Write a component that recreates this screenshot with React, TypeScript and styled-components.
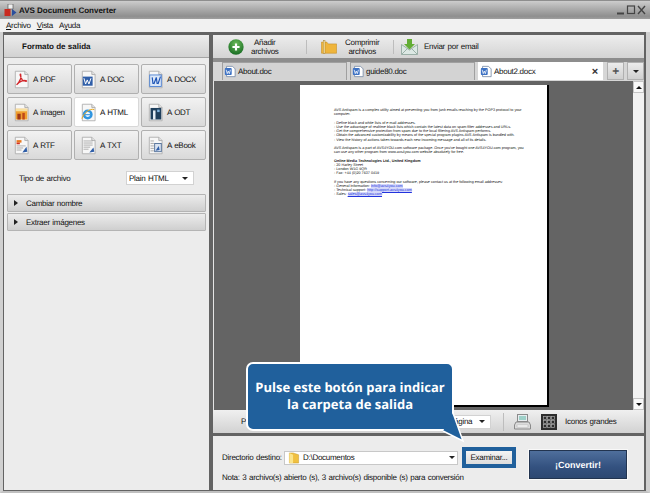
import React from "react";
import styled, { createGlobalStyle } from "styled-components";

const Global = createGlobalStyle`
  html, body { margin: 0; padding: 0; background: #b8b8b8; }
  #root { width: 650px; height: 493px; overflow: hidden; }
  * { box-sizing: border-box; }
`;

const Window = styled.div`
  position: relative;
  width: 650px;
  height: 493px;
  display: flex;
  flex-direction: column;
  overflow: hidden;
  background: #c9c9c9;
  border-top: 1px solid #8e8e8e;
  font-family: "Liberation Sans", Arial, sans-serif;
  font-size: 8px;
  letter-spacing: -0.28px;
  word-spacing: 0.6px;
  text-rendering: geometricPrecision;
  color: #111;
`;

const TitleBar = styled.div`
  height: 18px;
  flex: none;
  display: flex;
  align-items: center;
  padding: 0 4px 0 4px;
  gap: 2px;
  background: linear-gradient(#cdcdcd 0%, #b6b6b6 30%, #8f8f8f 85%, #9e9e9e 100%);
`;
const TitleText = styled.span`
  flex: 1;
  font-weight: 700;
  font-size: 8px;
  letter-spacing: 0;
  word-spacing: 0;
  color: #111;
`;
const MenuBar = styled.div`
  height: 13px;
  flex: none;
  display: flex;
  align-items: center;
  gap: 6px;
  padding: 0 6px;
  background: #f1f1f1;
  u { text-underline-offset: 1px; }
`;
const Body = styled.div`
  flex: 1;
  min-height: 0;
  display: flex;
  gap: 4px;
  background: #636363;
  border-left: 3px solid #d0d0d0;
  border-right: 4px solid #d0d0d0;
  border-bottom: 2px solid #c0c0c0;
  padding: 3px 2px 1px 1px;
`;
const LeftPanel = styled.aside`
  width: 205px;
  flex: none;
  display: flex;
  flex-direction: column;
  background: #ececec;
`;
const PanelHeader = styled.div`
  height: 23px;
  flex: none;
  display: flex;
  align-items: center;
  padding-left: 18px;
  font-weight: 700;
  letter-spacing: 0;
  word-spacing: 0;
  background: linear-gradient(#ededed, #d2d2d2);
  border-bottom: 1px solid #a5a5a5;
`;
const FormatGrid = styled.div`
  display: grid;
  grid-template-columns: repeat(3, 65px);
  grid-auto-rows: 30px;
  column-gap: 2px;
  row-gap: 3px;
  padding: 6px 0 0 3px;
`;
const FormatButton = styled.div<{ $active?: boolean }>`
  display: flex;
  align-items: center;
  gap: 3px;
  padding-left: 5px;
  border: 1px solid ${p => (p.$active ? "#d8d8d8" : "#b0b0b0")};
  border-radius: 2px;
  background: ${p => (p.$active ? "#ffffff" : "linear-gradient(#f2f2f2, #d9d9d9)")};
`;
const TypeRow = styled.div`
  display: flex;
  align-items: center;
  justify-content: space-between;
  padding: 2px 15px 0 15px;
  height: 34px;
`;
const Select = styled.div<{ $w: number }>`
  width: ${p => p.$w}px;
  height: 14px;
  flex: none;
  display: flex;
  align-items: center;
  justify-content: space-between;
  padding: 0 5px 0 2px;
  background: #fff;
  border: 1px solid #d2d2d2;
`;
const Caret = styled.span`
  width: 0;
  height: 0;
  flex: none;
  border-left: 3px solid transparent;
  border-right: 3px solid transparent;
  border-top: 3px solid #222;
`;
const Accordion = styled.div`
  display: flex;
  flex-direction: column;
  gap: 1px;
  margin: 0 3px;
`;
const AccordionRow = styled.div`
  height: 18px;
  display: flex;
  align-items: center;
  gap: 8px;
  padding-left: 6px;
  background: linear-gradient(#ececec, #cfcfcf);
  border: 1px solid #b4b4b4;
  border-radius: 1px;
`;
const Arrow = styled.span`
  width: 0;
  height: 0;
  border-top: 3px solid transparent;
  border-bottom: 3px solid transparent;
  border-left: 4px solid #222;
`;
const RightColumn = styled.main`
  flex: 1;
  min-width: 0;
  display: flex;
  flex-direction: column;
`;
const Workspace = styled.section`
  flex: 1;
  min-height: 0;
  display: flex;
  flex-direction: column;
  background: #e4e4e4;
`;
const Toolbar = styled.div`
  height: 23px;
  flex: none;
  display: flex;
  align-items: center;
  background: linear-gradient(#ededed, #d4d4d4);
  padding-left: 15px;
`;
const ToolItem = styled.div<{ $w: number; $gap: number }>`
  width: ${p => p.$w}px;
  flex: none;
  display: flex;
  align-items: center;
  gap: ${p => p.$gap}px;
  line-height: 9px;
`;
const ToolLabel = styled.span`
  text-align: center;
`;
const ToolSep = styled.span<{ $after: number }>`
  width: 1px;
  height: 14px;
  flex: none;
  margin-right: ${p => p.$after}px;
  background: #bdbdbd;
`;
const TabStrip = styled.div`
  height: 23px;
  flex: none;
  display: flex;
  align-items: flex-start;
  gap: 3px;
  padding: 4px 0 0 9px;
  background: linear-gradient(#8d8d8d 0, #8d8d8d 4px, #d6d6d6 4px, #d6d6d6 100%);
`;
const Tab = styled.div<{ $active?: boolean }>`
  width: 125px;
  height: 18px;
  flex: none;
  display: flex;
  align-items: center;
  gap: 2px;
  padding: 0 4px 0 1px;
  background: ${p => (p.$active ? "#fff" : "#d3d3d3")};
  border: 1px solid ${p => (p.$active ? "#fff" : "#a0a0a0")};
  border-bottom: none;
  margin-right: ${p => (p.$active ? 1 : 0)}px;
`;
const TabName = styled.span`
  flex: 1;
`;
const TabClose = styled.b`
  font-size: 11px;
  line-height: 10px;
  color: #333;
`;
const TabButton = styled.div`
  width: 17px;
  height: 18px;
  flex: none;
  display: flex;
  align-items: center;
  justify-content: center;
  background: linear-gradient(#ececec, #cfcfcf);
  border: 1px solid #b0b0b0;
  font-weight: 700;
  font-size: 12px;
  color: #555;
`;
const Viewer = styled.div`
  flex: 1;
  min-height: 0;
  display: flex;
  background: #646464;
  margin-left: 1px;
`;
const PageArea = styled.div`
  flex: 1;
  min-width: 0;
  display: flex;
  padding: 4px 0 0 86px;
`;
const Page = styled.article`
  width: 249px;
  height: 322px;
  flex: none;
  background: #fff;
  border-right: 2px solid #000;
  border-bottom: 2px solid #000;
  padding: 23px 17px 0 34px;
  font-size: 3.72px;
  letter-spacing: 0;
  word-spacing: 0;
  line-height: 4.25px;
  color: #111;
`;
const Para = styled.p`
  margin: 0 0 4.1px;
`;
const PageLink = styled.span`
  color: #2233dd;
  background: #d5d8fa;
  text-decoration: underline;
`;
const Scrollbar = styled.div`
  width: 11px;
  flex: none;
  display: flex;
  flex-direction: column;
  justify-content: space-between;
  background: #f2f2f2;
`;
const ScrollBtn = styled.div<{ $down?: boolean }>`
  height: 12px;
  display: flex;
  align-items: center;
  justify-content: center;
  background: #f8f8f8;
  border: 1px solid #c4c4c4;
  &::after {
    content: "";
    border-left: 3px solid transparent;
    border-right: 3px solid transparent;
    ${p => (p.$down ? "border-top: 3px solid #111;" : "border-bottom: 3px solid #111;")}
  }
`;
const ViewBar = styled.div`
  height: 23px;
  flex: none;
  display: flex;
  align-items: center;
  padding-left: 28px;
  background: linear-gradient(#f0f0f0, #d2d2d2);
`;
const ViewSpacer = styled.span<{ $w: number }>`
  flex: none;
  width: ${p => p.$w}px;
`;
const ViewSep = styled.span`
  width: 1px;
  height: 18px;
  flex: none;
  margin: 0 10px 0 12px;
  background: #bdbdbd;
`;
const BottomPanel = styled.section`
  height: 54px;
  flex: none;
  margin-top: 3px;
  display: flex;
  background: #ececec;
  padding: 11px 0 0 9px;
  gap: 13px;
`;
const DirBlock = styled.div`
  width: 294px;
  flex: none;
  display: flex;
  flex-direction: column;
  gap: 5px;
  line-height: 9px;
  white-space: nowrap;
`;
const DirRow = styled.div`
  display: flex;
  align-items: center;
  gap: 2px;
`;
const DirLabel = styled.span`
  width: 60px;
  flex: none;
`;
const DirInput = styled.div`
  width: 174px;
  height: 14px;
  flex: none;
  display: flex;
  align-items: center;
  gap: 3px;
  padding: 0 2px 0 3px;
  background: #fff;
  border: 1px solid #c8c8c8;
`;
const DirValue = styled.span`
  flex: 1;
`;
const BrowseFrame = styled.div`
  flex: none;
  margin-left: 2px;
  padding: 4px;
  background: #20609c;
`;
const BrowseButton = styled.div`
  width: 46px;
  height: 13px;
  display: flex;
  align-items: center;
  justify-content: center;
  background: linear-gradient(#f4f4f4, #dddddd);
`;
const ConvertButton = styled.div`
  width: 98px;
  height: 29px;
  flex: none;
  margin-top: 3px;
  display: flex;
  align-items: center;
  justify-content: center;
  background: linear-gradient(#4f6f9c, #33517f 60%, #2d4872);
  border: 1px solid #22344f;
  box-shadow: 0 0 0 1px #f8f8f8;
  color: #fff;
  font-weight: 700;
  font-size: 9px;
  letter-spacing: 0;
`;
const Callout = styled.div`
  position: absolute;
  left: 246px;
  top: 361px;
  width: 208px;
  height: 69px;
  display: flex;
  align-items: center;
  justify-content: center;
  text-align: center;
  padding-bottom: 2px;
  background: #20609c;
  border: 2px solid #fff;
  border-radius: 7px;
  color: #fff;
  font-family: "Open Sans", "Liberation Sans", sans-serif;
  font-weight: 700;
  font-size: 13px;
  letter-spacing: 0;
  word-spacing: 0;
  line-height: 16.5px;
`;
const CalloutTail = styled.svg`
  position: absolute;
  left: 438px;
  top: 407px;
  width: 30px;
  height: 36px;
`;
const IconSvg = styled.svg`
  flex: none;
`;

function DocIcon({ kind }: { kind: string }) {
  return (
    <IconSvg width={17} height={19} viewBox="0 0 20 23">
      <path d="M2.5 1.5H14L18 5.5V21.5H2.5Z" fill="#f7f7f7" stroke="#a9a9a9" />
      <path d="M14 1.5V5.5H18" fill="#e2e2e2" stroke="#a9a9a9" />
      {kind === "pdf" && (
        <path d="M4 18C8 14 10 9 9 5C8 4 8 8 11 12C13 14 17 14 16 13C14 12 8 13 4 18Z" fill="none" stroke="#d2262a" strokeWidth="1.5" />
      )}
      {kind === "doc" && (
        <>
          <rect x="3" y="8" width="12" height="11" fill="#2f5ea8" />
          <path d="M4.5 10L6.5 17L8.5 12L10.5 17L13 10" stroke="#fff" strokeWidth="1.2" fill="none" />
        </>
      )}
      {kind === "docx" && (
        <>
          <rect x="3" y="6" width="14" height="14" fill="#dbe7f8" stroke="#3f78cf" />
          <path d="M6 9L7 17M11 9L8 17M11 9L12 17M16 8L13 17" stroke="#1c53b5" strokeWidth="1.4" fill="none" />
        </>
      )}
      {kind === "img" && (
        <>
          <rect x="3" y="7" width="14" height="13" fill="#f0a030" />
          <rect x="3" y="7" width="14" height="3" fill="#f7e0a0" />
          <rect x="5" y="13" width="4" height="7" fill="#a03818" />
          <rect x="11" y="12" width="3" height="8" fill="#c04818" />
        </>
      )}
      {kind === "html" && (
        <>
          <circle cx="9" cy="14" r="6" fill="#2f95e0" />
          <circle cx="9" cy="14" r="3" fill="#f3f8fe" />
          <rect x="5.5" y="13.5" width="7" height="1.3" fill="#2f95e0" />
          <path d="M2 19C4 12 12 6 17 8" fill="none" stroke="#e8a820" strokeWidth="1.2" />
        </>
      )}
      {kind === "odt" && (
        <>
          <rect x="4" y="6" width="13" height="14" fill="#1f3f5c" />
          <rect x="7" y="9" width="3" height="11" fill="#e6eef5" />
          <rect x="12" y="8" width="3" height="3" fill="#7fb2dc" />
        </>
      )}
      {kind === "rtf" && (
        <>
          <rect x="4" y="5" width="6" height="3" fill="#e87820" />
          <rect x="4" y="8" width="4" height="2" fill="#d03020" />
          <path d="M4 12H15M4 14.5H12M4 17H10" stroke="#a0a0a0" />
          <path d="M11 20L16 13L17 19Z" fill="#2f5ea8" />
        </>
      )}
      {kind === "txt" && (
        <>
          <path d="M4 6H15M4 8.5H15M4 11H15M4 13.5H12M4 16H10" stroke="#a0a0a0" />
          <path d="M11 20L16 14L17 19Z" fill="#2f5ea8" />
        </>
      )}
      {kind === "ebook" && (
        <>
          <path d="M4 6H8M4 9H8M4 12H8M4 15H8M4 18H8" stroke="#9a9a9a" />
          <rect x="9" y="9" width="8" height="10" fill="#d8e2f0" stroke="#44648f" />
          <path d="M10 18L14 12L15 17Z" fill="#2f5ea8" />
        </>
      )}
    </IconSvg>
  );
}

function TabDocIcon() {
  return (
    <IconSvg width="12" height="13" viewBox="0 0 14 14">
      <path d="M3 1H10L13 4V13H3Z" fill="#fff" stroke="#7a8ea8" />
      <rect x="1" y="3" width="8" height="8" rx="1" fill="#3d72c4" />
      <path d="M2.5 5L3.8 9.5L5 6.5L6.2 9.5L7.5 5" stroke="#fff" strokeWidth="0.9" fill="none" />
    </IconSvg>
  );
}

function AppLogo() {
  return (
    <IconSvg width="13" height="13" viewBox="0 0 13 13">
      <rect x="4" y="0" width="5" height="5" fill="#eee" stroke="#444" strokeWidth="0.6" />
      <rect x="0.5" y="5" width="6" height="7" fill="#c92a20" />
      <path d="M8 5L12.5 8.5L8 12Z" fill="#2b4f9c" />
    </IconSvg>
  );
}

function WindowControls() {
  return (
    <IconSvg width="29" height="10" viewBox="0 0 29 10">
      <path d="M0 8.5H7" stroke="#444" strokeWidth="2" fill="none" />
      <rect x="10.5" y="1" width="7" height="7.5" stroke="#444" strokeWidth="1.2" fill="none" />
      <path d="M21 1L28 9M28 1L21 9" stroke="#444" strokeWidth="1.4" fill="none" />
    </IconSvg>
  );
}

function AddIcon() {
  return (
    <IconSvg width="16" height="16" viewBox="0 0 18 18">
      <defs>
        <radialGradient id="g" cx="50%" cy="30%" r="75%">
          <stop offset="0" stopColor="#6dbb5a" />
          <stop offset="1" stopColor="#11671f" />
        </radialGradient>
      </defs>
      <circle cx="9" cy="9" r="8.6" fill="url(#g)" />
      <path d="M9 5V13M5 9H13" stroke="#fff" strokeWidth="2.4" />
    </IconSvg>
  );
}

function ZipIcon() {
  return (
    <IconSvg width="16" height="14" viewBox="0 0 18 15">
      <path d="M0.5 2H6.5L8 4H17.5V14.5H0.5Z" fill="#efb53c" stroke="#c08a20" strokeWidth="0.6" />
      <rect x="2.5" y="0.5" width="2" height="14" fill="#fbe7a8" stroke="#a07820" strokeWidth="0.5" />
    </IconSvg>
  );
}

function MailIcon() {
  return (
    <IconSvg width="17" height="16" viewBox="0 0 17 16">
      <path d="M0.5 5.5L8.5 11L16.5 5.5V15.5H0.5Z" fill="#dce8e4" stroke="#9bb0a8" />
      <path d="M0.5 15.5L7 9M16.5 15.5L10 9" stroke="#9bb0a8" fill="none" />
      <path d="M6 0H11V5H14L8.5 10.5L3 5H6Z" fill="#62ad36" />
    </IconSvg>
  );
}

function PrinterIcon() {
  return (
    <IconSvg width="17" height="16" viewBox="0 0 17 16">
      <rect x="3.5" y="0.5" width="10" height="7" fill="#e8edf0" stroke="#8a8a8a" />
      <rect x="5" y="2" width="7" height="4" fill="#9ed0c8" />
      <path d="M2 8H15L16.5 11V15H0.5V11Z" fill="#dcdcdc" stroke="#8a8a8a" />
      <rect x="3" y="11" width="11" height="2" fill="#fff" stroke="#aaa" strokeWidth="0.5" />
    </IconSvg>
  );
}

function GridIcon() {
  const cells = [];
  for (let y = 0; y < 3; y++)
    for (let x = 0; x < 3; x++)
      cells.push(<rect key={`${x}${y}`} x={2.5 + x * 4} y={2.5 + y * 4} width="3" height="3" fill="none" stroke="#aaa" strokeWidth="0.7" />);
  return (
    <IconSvg width="16" height="16" viewBox="0 0 16 16">
      <rect width="16" height="16" fill="#2d2d2d" />
      {cells}
    </IconSvg>
  );
}

function FolderIcon() {
  return (
    <IconSvg width="12" height="12" viewBox="0 0 12 13">
      <path d="M1 1H5L11 3V12H1Z" fill="#f0c040" stroke="#c09428" strokeWidth="0.5" />
      <path d="M1 1L5 3V12H1Z" fill="#fbe48a" />
    </IconSvg>
  );
}

const formats = [
  ["pdf", "A PDF"], ["doc", "A DOC"], ["docx", "A DOCX"],
  ["img", "A imagen"], ["html", "A HTML"], ["odt", "A ODT"],
  ["rtf", "A RTF"], ["txt", "A TXT"], ["ebook", "A eBook"],
];

export default function App() {
  return (
    <Window>
      <Global />
      <TitleBar>
        <AppLogo />
        <TitleText>AVS Document Converter</TitleText>
        <WindowControls />
      </TitleBar>
      <MenuBar>
        <span><u>A</u>rchivo</span>
        <span><u>V</u>ista</span>
        <span>A<u>y</u>uda</span>
      </MenuBar>
      <Body>
        <LeftPanel>
          <PanelHeader>Formato de salida</PanelHeader>
          <FormatGrid>
            {formats.map(([k, t]) => (
              <FormatButton key={k} $active={k === "html"}>
                <DocIcon kind={k} />
                <span>{t}</span>
              </FormatButton>
            ))}
          </FormatGrid>
          <TypeRow>
            <span>Tipo de archivo</span>
            <Select $w={68}>Plain HTML<Caret /></Select>
          </TypeRow>
          <Accordion>
            <AccordionRow><Arrow />Cambiar nombre</AccordionRow>
            <AccordionRow><Arrow />Extraer imágenes</AccordionRow>
          </Accordion>
        </LeftPanel>
        <RightColumn>
          <Workspace>
            <Toolbar>
              <ToolItem $w={78} $gap={7}>
                <AddIcon />
                <ToolLabel>Añadir<br />archivos</ToolLabel>
              </ToolItem>
              <ToolSep $after={14} />
              <ToolItem $w={72} $gap={8}>
                <ZipIcon />
                <ToolLabel>Comprimir<br />archivos</ToolLabel>
              </ToolItem>
              <ToolSep $after={7} />
              <ToolItem $w={100} $gap={6}>
                <MailIcon />
                <ToolLabel>Enviar por email</ToolLabel>
              </ToolItem>
            </Toolbar>
            <TabStrip>
              <Tab><TabDocIcon /><TabName>About.doc</TabName></Tab>
              <Tab><TabDocIcon /><TabName>guide80.doc</TabName></Tab>
              <Tab $active><TabDocIcon /><TabName>About2.docx</TabName><TabClose>×</TabClose></Tab>
              <TabButton>+</TabButton>
              <TabButton><Caret /></TabButton>
            </TabStrip>
            <Viewer>
              <PageArea>
                <Page>
                  <Para>AVS Antispam is a complex utility aimed at preventing you from junk emails reaching by the POP3 protocol to your computer.</Para>
                  <Para>- Define black and white lists of e-mail addresses.<br />- Use the advantage of realtime black lists which contain the latest data on spam filter addresses and URLs.<br />- Get the comprehensive protection from spam due to the local filtering AVS Antispam performs.<br />- Obtain the advanced customizability by means of the special program plugins AVS Antispam is bundled with.<br />- View the history of actions taken towards each new incoming message and all of its details.</Para>
                  <Para>AVS Antispam is a part of AVS4YOU.com software package. Once you've bought one AVS4YOU.com program, you can use any other program from www.avs4you.com website absolutely for free.</Para>
                  <Para><b>Online Media Technologies Ltd., United Kingdom</b><br />- 20 Harley Street<br />- London W1G 9QR<br />- Fax: +44 (0)20 7637 0419</Para>
                  <Para>If you have any questions concerning our software, please contact us at the following email addresses:<br />- General information: <PageLink>info@avs4you.com</PageLink><br />- Technical support: <PageLink>http://support.avs4you.com</PageLink><br />- Sales: <PageLink>sales@avs4you.com</PageLink></Para>
                </Page>
              </PageArea>
              <Scrollbar>
                <ScrollBtn />
                <ScrollBtn $down />
              </Scrollbar>
            </Viewer>
            <ViewBar>
              <span>P</span>
              <ViewSpacer $w={205} />
              <Select $w={40}>ágina<Caret /></Select>
              <ViewSep />
              <PrinterIcon />
              <ViewSpacer $w={10} />
              <GridIcon />
              <ViewSpacer $w={8} />
              <span>Iconos grandes</span>
            </ViewBar>
          </Workspace>
          <BottomPanel>
            <DirBlock>
              <DirRow>
                <DirLabel>Directorio destino:</DirLabel>
                <DirInput><FolderIcon /><DirValue>D:\Documentos</DirValue><Caret /></DirInput>
                <BrowseFrame><BrowseButton>Examinar...</BrowseButton></BrowseFrame>
              </DirRow>
              <span>Nota: 3 archivo(s) abierto (s), 3 archivo(s) disponible (s) para conversión</span>
            </DirBlock>
            <ConvertButton>¡Convertir!</ConvertButton>
          </BottomPanel>
        </RightColumn>
      </Body>
      <Callout>Pulse este botón para indicar<br />la carpeta de salida</Callout>
      <CalloutTail viewBox="0 0 30 36">
        <path d="M15 5L25 33L5 23" fill="#20609c" stroke="#fff" strokeWidth="1.5" />
      </CalloutTail>
    </Window>
  );
}
